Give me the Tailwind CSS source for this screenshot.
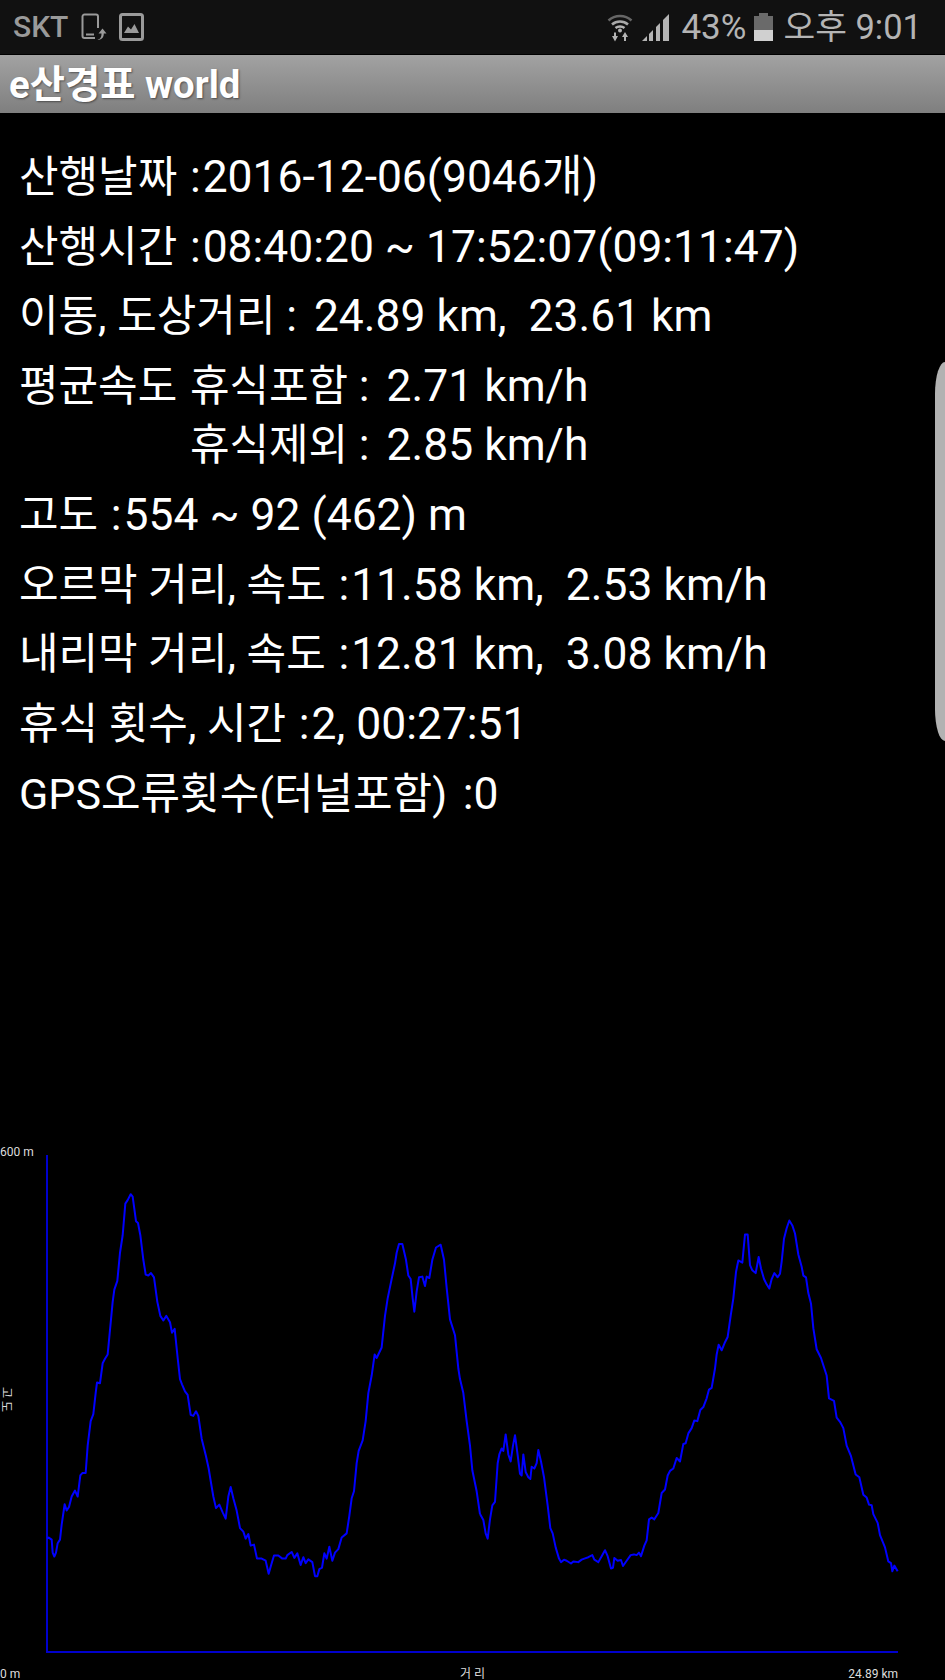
<!DOCTYPE html>
<html lang="ko">
<head>
  <meta charset="UTF-8">
  <meta name="viewport" content="width=device-width, initial-scale=1.0">
  <title>e산경표 world</title>
  <script src="https://cdn.jsdelivr.net/npm/@tailwindcss/browser@4"></script>
</head>
<body class="bg-black">
  <div class="relative flex h-[1680px] w-[945px] flex-col overflow-hidden bg-black font-['Roboto','Noto_Sans_CJK_KR',sans-serif] text-white">

    <!-- status bar -->
    <div class="flex h-[55px] shrink-0 items-center justify-between border-b border-black bg-[#111111] pl-[13px] pr-[23px]">
      <div class="flex items-center text-[#9a9a9a]">
        <span class="text-[30px] leading-none font-medium">SKT</span>
        <svg class="ml-[13px]" width="26" height="28" viewBox="0 0 26 28" fill="none">
          <path d="M17 15V3.500A2 2 0 0 0 15 1.500H3.500A2 2 0 0 0 1.500 3.500V23A2 2 0 0 0 3.500 25H14" stroke="#9a9a9a" stroke-width="2"/>
          <path d="M5 21.500H13" stroke="#9a9a9a" stroke-width="2"/>
          <path d="M15 27C19 27 20.500 24.500 20.500 20.500H17.500L21.500 15.500L25.500 20.500H22.800C22.800 25 20 27.500 15 27Z" fill="#9a9a9a"/>
        </svg>
        <svg class="ml-[12px]" width="25" height="28" viewBox="0 0 25 28" fill="none">
          <rect x="1.500" y="1.500" width="22" height="25" rx="2" stroke="#9a9a9a" stroke-width="3"/>
          <path d="M5 20L9 13.500L12 16.500L15.500 11L20 20Z" fill="#9a9a9a"/>
        </svg>
      </div>
      <div class="flex items-center text-[#b4b4b4]">
        <svg width="26" height="30" viewBox="0 0 26 30" fill="none">
          <path d="M1.500 8.500C8 2.500 18 2.500 24.500 8.500" stroke="#666666" stroke-width="2.500"/>
          <path d="M5 12.500C9.500 8.500 16.500 8.500 21 12.500" stroke="#a8a8a8" stroke-width="2.500"/>
          <path d="M8.500 16C11 14 15 14 17.500 16" stroke="#b4b4b4" stroke-width="2.500"/>
          <circle cx="13" cy="18.500" r="2" fill="#b4b4b4"/>
          <path d="M5 24H7V20.500H9V24H11L8 29.500Z" fill="#b4b4b4"/>
          <path d="M15 25H17V29H19V25H21L18 20Z" fill="#b4b4b4"/>
        </svg>
        <svg class="ml-[8px]" width="29" height="29" viewBox="0 0 29 29">
          <path d="M1 28L6 23V28Z" fill="#b4b4b4"/>
          <path d="M8 21L12 17V28H8Z" fill="#b4b4b4"/>
          <path d="M15 14L19 10V28H15Z" fill="#b4b4b4"/>
          <path d="M22 7L28 1V28H22Z" fill="#b4b4b4"/>
        </svg>
        <span class="ml-[11px] text-[35px] leading-none">43%</span>
        <svg class="ml-[8px]" width="19" height="28" viewBox="0 0 19 28">
          <path d="M5 0H14V3H19V28H0V3H5Z" fill="#6a6a6a"/>
          <rect x="0" y="17" width="19" height="11" fill="#d0d0d0"/>
        </svg>
        <span class="ml-[10px] text-[34.5px] leading-none">오후 9:01</span>
      </div>
    </div>

    <!-- title bar -->
    <div class="flex h-[58px] shrink-0 items-center bg-gradient-to-b from-[#a2a2a2] to-[#7f7f7f] pl-[9px]">
      <h1 class="pt-[2px] text-[38.3px] leading-none font-bold text-white [text-shadow:1px_1px_2px_rgba(0,0,0,0.45)]">e산경표 world</h1>
    </div>

    <!-- summary rows: labels a little smaller than values -->
    <div class="flex flex-col pt-[30px] pl-[19px] text-[44.4px] leading-[69.7px] whitespace-pre">
      <div><span class="text-[43px]">산행날짜 </span><span class="mx-[2px]">:</span>2016-12-06(9046개)</div>
      <div><span class="text-[43px]">산행시간 </span><span class="mx-[2px]">:</span>08:40:20 ~ 17:52:07(09:11:47)</div>
      <div><span class="text-[43px]">이동, 도상거리 </span>: <span class="ml-[6px]">24.89 km,  23.61 km</span></div>
      <div class="flex">
        <span class="text-[43px]">평균속도 </span>
        <div class="ml-[2px] flex flex-col">
          <span class="h-[59px]"><span class="text-[43px]">휴식포함 </span>: <span class="ml-[6px]">2.71 km/h</span></span>
          <span class="h-[69.7px]"><span class="text-[43px]">휴식제외 </span>: <span class="ml-[6px]">2.85 km/h</span></span>
        </div>
      </div>
      <div><span class="text-[43px]">고도 </span><span class="mx-[2px]">:</span>554 ~ 92 (462) m</div>
      <div><span class="text-[43px]">오르막 거리, 속도 </span><span class="mx-[2px]">:</span>11.58 km,  2.53 km/h</div>
      <div><span class="text-[43px]">내리막 거리, 속도 </span><span class="mx-[2px]">:</span>12.81 km,  3.08 km/h</div>
      <div><span class="text-[43px]">휴식 횟수, 시간 </span><span class="mx-[2px]">:</span>2, 00:27:51</div>
      <div><span class="text-[43px]">GPS오류횟수(터널포함) </span><span class="ml-[5px]">:</span>0</div>
    </div>

    <!-- elevation chart -->
    <div class="relative mt-auto h-[550px] w-full shrink-0 text-[12px] leading-none text-[#dddddd]">
      <span class="absolute top-[16px] left-0">600 m</span>
      <span class="absolute top-[257px] left-0 [writing-mode:vertical-rl] [text-orientation:sideways]">고 도</span>
      <span class="absolute bottom-0 left-0">0 m</span>
      <span class="absolute bottom-0 left-[460px]">거 리</span>
      <span class="absolute right-[47px] bottom-0">24.89 km</span>
      <svg class="absolute inset-0" width="945" height="550" viewBox="0 0 945 550" fill="none">
        <path d="M47 25V522H898" stroke="#0000cc" stroke-width="2"/>
        <g transform="scale(0.33333 0.35075)">
          <polyline vector-effect="non-scaling-stroke" stroke="#0000ff" stroke-width="2" stroke-linejoin="round" points="141,1165 146,1162 155,1168 158,1205 163,1216 168,1205 173,1178 180,1168 185,1125 194,1067 200,1085 207,1075 215,1045 225,1028 233,1045 241,985 247,978 257,978 263,900 272,830 280,810 287,750 291,720 300,722 308,665 315,652 323,640 330,570 338,490 343,455 352,430 360,350 368,300 376,210 383,200 392,183 398,190 408,260 414,265 421,300 430,370 437,412 445,415 453,408 462,420 472,490 481,530 490,543 499,530 510,548 516,578 524,567 533,650 540,710 546,725 555,745 563,755 572,812 580,815 588,802 595,815 605,880 618,930 626,965 632,1000 640,1045 648,1078 658,1068 668,1090 677,1108 685,1045 692,1018 700,1050 710,1085 720,1135 730,1145 737,1165 745,1152 752,1185 762,1182 771,1222 785,1222 797,1228 806,1265 815,1235 822,1213 835,1213 847,1222 857,1222 862,1212 875,1203 883,1220 892,1207 902,1240 910,1218 917,1235 925,1224 937,1232 945,1272 952,1272 958,1252 966,1248 973,1207 980,1222 988,1188 997,1228 1005,1205 1015,1195 1025,1162 1040,1150 1048,1100 1055,1050 1062,1030 1070,950 1076,915 1088,885 1097,830 1105,750 1115,700 1124,640 1130,650 1145,620 1155,530 1163,480 1175,425 1185,380 1190,350 1197,325 1207,325 1218,370 1225,415 1232,425 1238,480 1243,518 1250,460 1257,420 1267,418 1275,445 1280,418 1288,422 1297,370 1308,335 1322,327 1332,370 1340,450 1350,540 1365,585 1375,680 1380,710 1390,750 1400,830 1410,900 1417,970 1430,1030 1440,1095"/>
        </g>
        <g transform="translate(465 0) scale(0.33333 0.35075)">
          <polyline vector-effect="non-scaling-stroke" stroke="#0000ff" stroke-width="2" stroke-linejoin="round" points="45,1095 55,1112 62,1150 68,1165 75,1110 82,1070 90,1060 98,950 103,925 110,908 115,915 122,868 130,925 137,945 144,900 150,870 157,920 165,980 170,985 175,925 182,975 190,990 196,995 200,960 208,965 215,950 220,912 228,945 237,990 248,1070 256,1135 263,1150 272,1190 282,1222 288,1232 297,1225 305,1228 318,1236 325,1230 340,1232 350,1225 358,1222 370,1218 382,1212 388,1225 400,1232 410,1215 420,1198 428,1215 438,1250 444,1248 448,1220 458,1228 468,1226 474,1243 485,1228 497,1212 507,1210 515,1212 522,1205 528,1215 538,1185 545,1170 552,1110 560,1105 568,1110 580,1092 590,1035 600,1025 608,985 615,972 625,965 635,935 645,945 655,895 662,893 670,865 680,850 688,828 697,830 706,798 715,790 725,765 732,740 740,735 750,680 755,640 761,612 770,628 780,605 788,590 797,530 805,480 813,405 820,372 832,378 840,298 848,298 855,385 862,400 872,408 881,362 888,395 897,425 905,440 913,452 920,425 928,408 938,420 945,410 950,375 957,310 965,280 973,258 982,272 990,295 1000,355 1010,390 1015,415 1023,420 1030,465 1038,495 1045,565 1055,625 1068,650 1085,700 1092,765 1107,772 1115,820 1125,832 1135,850 1145,900 1158,930 1172,982 1183,990 1195,1040 1205,1048 1212,1068 1220,1070 1225,1095 1238,1120 1245,1155 1260,1190 1270,1230 1278,1235 1282,1258 1288,1242 1298,1258"/>
        </g>
      </svg>
    </div>

    <!-- edge panel handle -->
    <div class="absolute top-[362px] right-0 h-[379px] w-[10px] rounded-l-[10px_32px] bg-[#b2b2b2]"></div>
  </div>
</body>
</html>
